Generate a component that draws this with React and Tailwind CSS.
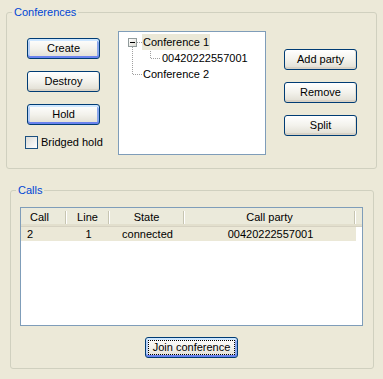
import React from "react";

function XPButton({ children, focused, dotted, className = "" }) {
  return (
    <div
      className={`flex items-center justify-center h-[21px] rounded-[3px] border border-[#003c74] bg-linear-to-b from-white via-[#f3f2ec] to-[#e0ddd2] leading-[13px] whitespace-nowrap ${
        focused
          ? "shadow-[inset_0_2px_0_#cee7ff,inset_0_-2px_0_#6982ee,inset_2px_0_0_#b9d1f6,inset_-2px_0_0_#8aa7ec]"
          : "shadow-[inset_0_-2px_0_#d8d2c6,inset_-1px_0_0_#e2ded3]"
      } ${dotted ? "p-[2px]" : ""} ${className}`}
    >
      {dotted ? (
        <span className="flex flex-1 self-stretch items-center justify-center border border-dotted border-black">
          {children}
        </span>
      ) : (
        children
      )}
    </div>
  );
}

function GroupBox({ title, className = "", children }) {
  return (
    <div className={`relative border border-[#d0d0bf] rounded-[3px] ${className}`}>
      <span className="absolute top-[-8px] left-[5px] px-[2px] bg-[#ece9d8] text-[#0046d5] leading-[14px]">
        {title}
      </span>
      {children}
    </div>
  );
}

function Tree() {
  return (
    <div className="relative ml-[18px] w-[148px] h-[124px] border border-[#7f9db9] bg-white pt-[2px]">
      <svg className="absolute left-0 top-0" width="146" height="122" shapeRendering="crispEdges">
        <g stroke="#a0a0a0" strokeWidth="1" strokeDasharray="1 1" fill="none">
          <line x1="13.5" y1="15" x2="13.5" y2="43" />
          <line x1="14" y1="42.5" x2="23" y2="42.5" />
          <line x1="18" y1="10.5" x2="23" y2="10.5" />
          <line x1="31.5" y1="19" x2="31.5" y2="27" />
          <line x1="32" y1="26.5" x2="42" y2="26.5" />
        </g>
      </svg>
      <div className="relative flex items-center h-[16px] pl-[9px]">
        <span className="flex items-center justify-center w-[9px] h-[9px] border border-[#919b9c] bg-linear-to-br from-white to-[#dcdad2]">
          <span className="w-[5px] h-[1px] bg-[#000]" />
        </span>
        <span className="ml-[5px] px-[1px] h-[16px] flex items-center bg-[#ebe8d7] leading-[13px]">Conference 1</span>
      </div>
      <div className="relative flex items-center h-[16px] pl-[42px]">
        <span className="px-[1px] leading-[13px]">00420222557001</span>
      </div>
      <div className="relative flex items-center h-[16px] pl-[23px]">
        <span className="px-[1px] leading-[13px]">Conference 2</span>
      </div>
    </div>
  );
}

function Sep() {
  return <span className="w-[2px] h-[13px] border-l border-[#c7c5b2] border-r border-r-white shrink-0" />;
}

export default function App() {
  return (
    <div className="w-[383px] h-[379px] bg-[#ece9d8] text-[11px] text-black font-['Liberation_Sans',Arial,sans-serif] flex flex-col items-start pl-[6px] pt-[12px] overflow-hidden">
      <GroupBox title="Conferences" className="w-[371px] h-[157px] shrink-0">
        <div className="flex items-start pl-[20px] pt-[18px]">
          <div className="flex flex-col w-[73px] mt-[7px]">
            <XPButton focused>Create</XPButton>
            <XPButton className="mt-[12px]">Destroy</XPButton>
            <XPButton focused className="mt-[12px]">Hold</XPButton>
            <div className="flex items-center mt-[11px] -ml-[2px] gap-[3px] whitespace-nowrap leading-[13px]">
              <span className="w-[13px] h-[13px] shrink-0 border border-[#1c5180] bg-linear-to-br from-[#dcdcd7] to-white" />
              <span>Bridged hold</span>
            </div>
          </div>
          <Tree />
          <div className="flex flex-col w-[73px] ml-[18px] mt-[18px]">
            <XPButton>Add party</XPButton>
            <XPButton className="mt-[12px]">Remove</XPButton>
            <XPButton className="mt-[12px]">Split</XPButton>
          </div>
        </div>
      </GroupBox>

      <GroupBox title="Calls" className="ml-[4px] mt-[21px] w-[364px] h-[179px] shrink-0">
        <div className="flex flex-col items-start pl-[9px] pt-[16px]">
          <div className="w-[343px] h-[119px] border border-[#7f9db9] bg-white">
            <div className="flex h-[19px] w-full bg-[#ebeadb] border-b border-[#d6d2c2] shadow-[inset_0_-2px_0_#e2dfcd]">
              <div className="flex items-center w-[46px] pl-[9px]">
                <span className="flex-1">Call</span>
                <Sep />
              </div>
              <div className="flex items-center w-[43px]">
                <span className="flex-1 text-center">Line</span>
                <Sep />
              </div>
              <div className="flex items-center w-[75px]">
                <span className="flex-1 text-center">State</span>
                <Sep />
              </div>
              <div className="flex items-center w-[171px]">
                <span className="flex-1 text-center">Call party</span>
                <Sep />
              </div>
            </div>
            <div className="flex items-center h-[14px] w-[335px] bg-[#ebe8d7] leading-[13px]">
              <span className="w-[46px] pl-[6px]">2</span>
              <span className="w-[43px] text-center">1</span>
              <span className="w-[75px] text-center">connected</span>
              <span className="w-[171px] text-center">00420222557001</span>
            </div>
          </div>
          <XPButton focused dotted className="w-[93px] mt-[11px] ml-[125px]">
            Join conference
          </XPButton>
        </div>
      </GroupBox>
    </div>
  );
}
